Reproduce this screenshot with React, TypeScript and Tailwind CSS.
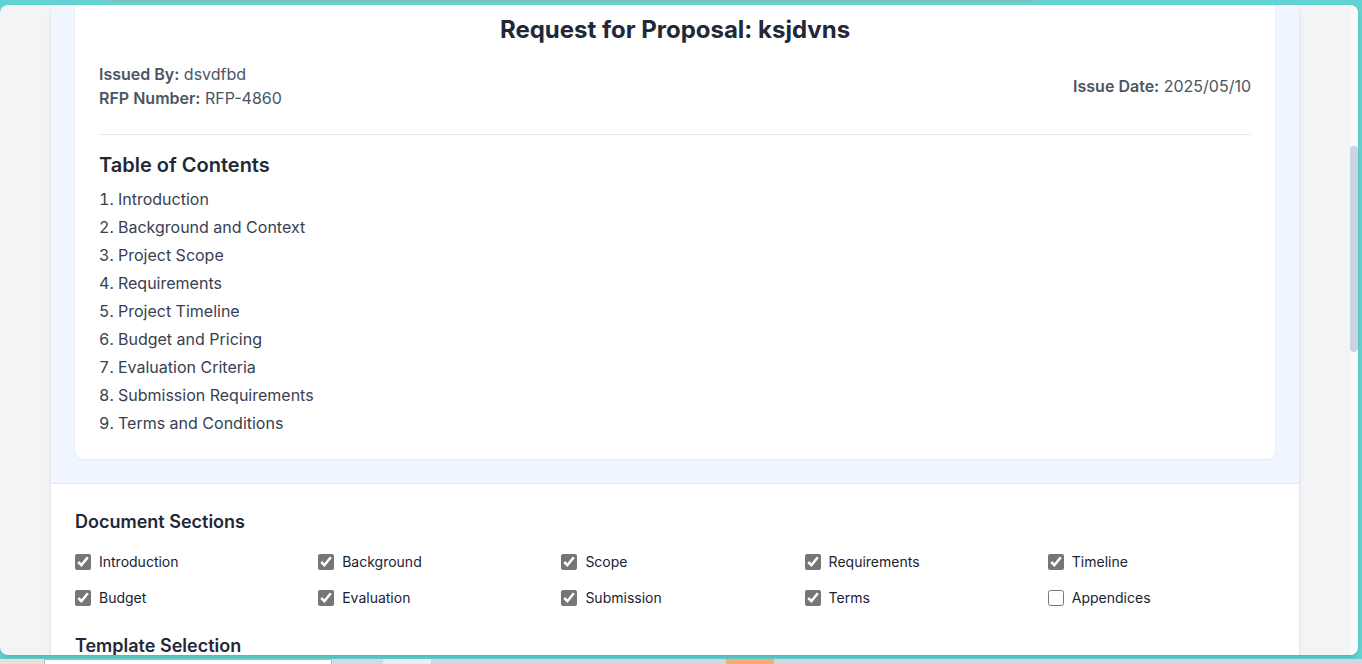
const contents = [
  'Introduction',
  'Background and Context',
  'Project Scope',
  'Requirements',
  'Project Timeline',
  'Budget and Pricing',
  'Evaluation Criteria',
  'Submission Requirements',
  'Terms and Conditions',
];

const sections = [
  { id: 'introduction', label: 'Introduction', on: true },
  { id: 'background', label: 'Background', on: true },
  { id: 'scope', label: 'Scope', on: true },
  { id: 'requirements', label: 'Requirements', on: true },
  { id: 'timeline', label: 'Timeline', on: true },
  { id: 'budget', label: 'Budget', on: true },
  { id: 'evaluation', label: 'Evaluation', on: true },
  { id: 'submission', label: 'Submission', on: true },
  { id: 'terms', label: 'Terms', on: true },
  { id: 'appendices', label: 'Appendices', on: false },
];

function DocumentPreview() {
  return (
    <section className="border-b border-gray-200 bg-[#eff6ff] px-6 pb-6">
      <article className="rounded-b-lg bg-white px-6 pt-[9px] pb-6 shadow-xs">
        <h1 className="mb-4 text-center text-2xl font-bold text-[#1f2937]">
          Request for Proposal: ksjdvns
        </h1>
        <div className="mb-4 flex items-center justify-between border-b border-[#e5e7eb] pb-6 text-[#4b5563]">
          <div>
            <p>
              <strong className="font-semibold">Issued By:</strong> dsvdfbd
            </p>
            <p>
              <strong className="font-semibold">RFP Number:</strong> RFP-4860
            </p>
          </div>
          <p>
            <strong className="font-semibold">Issue Date:</strong> 2025/05/10
          </p>
        </div>
        <h2 className="mb-2 text-xl font-semibold text-[#1f2937]">Table of Contents</h2>
        <ol className="list-inside list-decimal space-y-1 text-[#374151]">
          {contents.map((title) => (
            <li key={title}>{title}</li>
          ))}
        </ol>
      </article>
    </section>
  );
}

function DocumentSections() {
  return (
    <section className="p-6">
      <h3 className="mb-4 text-lg font-semibold text-[#1f2937]">Document Sections</h3>
      <div className="mb-6 grid grid-cols-5 gap-4">
        {sections.map((s) => (
          <div key={s.id} className="flex items-center gap-2">
            <input
              id={s.id}
              type="checkbox"
              defaultChecked={s.on}
              className="size-4 accent-[#767676]"
            />
            <label htmlFor={s.id} className="text-sm text-[#1a2233]">
              {s.label}
            </label>
          </div>
        ))}
      </div>
      <h3 className="text-lg font-semibold text-[#1f2937]">Template Selection</h3>
    </section>
  );
}

export default function App() {
  return (
    <div className="flex h-screen flex-col overflow-hidden bg-[#62d2d3] font-['Inter',sans-serif] text-base">
      <div className="flex h-[5px] shrink-0 items-start">
        <div className="mr-81 ml-27 h-px flex-1 bg-[#86bdb8]" />
      </div>
      <div className="mr-1 flex min-h-0 flex-1 overflow-hidden rounded-lg bg-[#f3f4f6] shadow-md">
        <main className="min-w-0 flex-1 overflow-hidden px-[51px]">
          <div className="bg-white shadow-md">
            <DocumentPreview />
            <DocumentSections />
          </div>
        </main>
        <div className="flex w-2 flex-col bg-[#f8fafc]">
          <div className="flex-[141]" />
          <div className="flex-[206] rounded-full bg-[#cbd5e1]" />
          <div className="flex-[303]" />
        </div>
      </div>
      <div className="mt-1 flex h-[5px] shrink-0 bg-[#d2d7e0]">
        <div className="w-11 bg-[#ecdfd3]" />
        <div className="w-72 border border-b-0 border-[#b5babb] bg-white" />
        <div className="w-[51px] bg-[#d0dce1]" />
        <div className="w-12 bg-[#e9eef3]" />
        <div className="ml-[295px] w-12 bg-[#f5ad74]" />
      </div>
    </div>
  );
}
